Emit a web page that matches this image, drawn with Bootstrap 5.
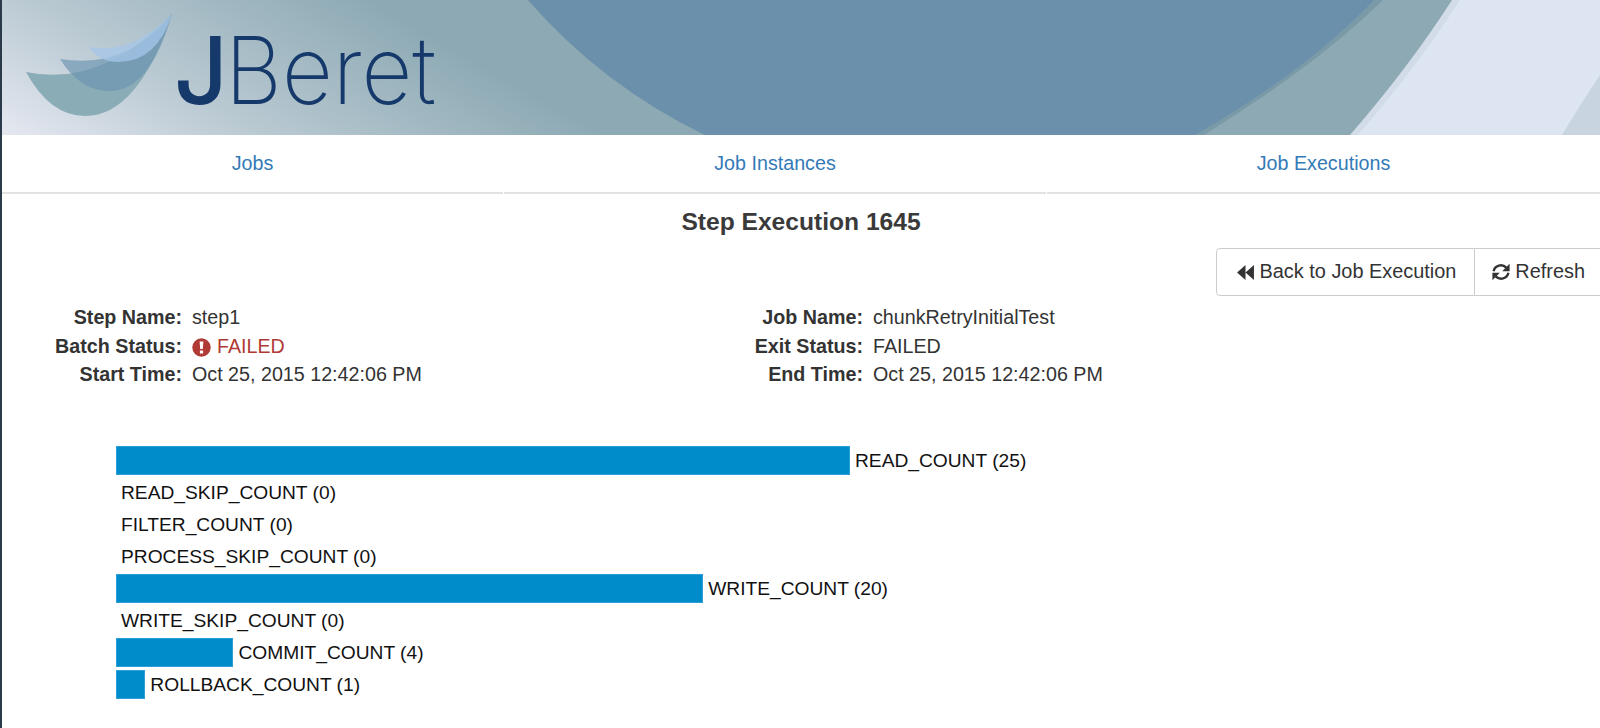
<!DOCTYPE html>
<html lang="en">
<head>
  <meta charset="UTF-8" />
  <meta name="viewport" content="width=device-width, initial-scale=1.0"/>
  <title>JBeret - Step Execution</title>
  <link href="https://cdn.jsdelivr.net/npm/bootstrap@5.3.0/dist/css/bootstrap.min.css" rel="stylesheet"/>
  <style>
    body {
      font-family: "Liberation Sans", Arial, sans-serif;
      font-size: 19.7px;
      color: #333;
      border-left: 2px solid #2b3a4a;
      min-height: 100vh;
      overflow: hidden;
    }
    .banner-art { display: block; width: 100%; height: 135px; }
    .logo-thin { font-family: Inter, "Liberation Sans", sans-serif; font-weight: 200; font-size: 94px; fill: #16396b; }
    .logo-bold { font-family: Inter, "Liberation Sans", sans-serif; font-weight: 500; font-size: 94px; fill: #16396b; }

    .main-tabs { height: 59px; }
    .main-tabs a {
      display: flex;
      align-items: center;
      justify-content: center;
      height: 59px;
      padding-top: 1px;
      color: #337ab7;
      text-decoration: none;
      border-bottom: 2px solid #e2e2e2;
    }
    .tab-jobs { width: 501px; margin-right: 1px; }
    .tab-instances { width: 542px; margin-right: 1px; }
    .tab-executions { flex: 1; }

    .step-title { font-size: 24.6px; font-weight: 700; line-height: 30px; margin: 13px 0 11px; text-align: center; color: #3a3a3a; }

    .back-group .btn {
      font-size: 19.9px;
      color: #333;
      height: 48px;
      padding: 0 18px 0 20px;
      border: 1px solid #ccc;
      border-radius: 4px 0 0 4px;
      display: flex;
      align-items: center;
      gap: 6px;
    }
    .back-group .btn + .btn { border-left: 0; border-right: 0; border-radius: 0; padding: 0 15px 0 16px; gap: 4px; }

    .info-row { margin-top: 7px; line-height: 28.5px; }
    .info-list { display: grid; column-gap: 10px; margin: 0; }
    .info-list dt { text-align: right; font-weight: 700; }
    .info-list dd { margin: 0; }
    .info-left { width: 682px; grid-template-columns: 180px 1fr; }
    .info-right { grid-template-columns: 179px 1fr; }
    .failed-text { color: #b03a36; }
    .failed-icon { margin-right: 6px; }

    .count-chart { margin: 57px 0 0 114px; color: #111; font-size: 19.2px; }
    .count-row { display: flex; align-items: center; height: 29px; margin-bottom: 3px; }
    .count-bar { height: 29px; background: #008bcb; border: 1px solid #2d9fd6; }
    .count-label { margin-left: 5px; padding-top: 2px; white-space: nowrap; }
  </style>
</head>
<body>

  <svg class="banner-art" viewBox="0 0 1598 135" preserveAspectRatio="none" aria-label="JBeret banner">
    <defs>
      <linearGradient id="bannerFade" gradientUnits="userSpaceOnUse" x1="0" y1="135" x2="150" y2="-125">
        <stop offset="0" stop-color="#e5e8f1"/>
        <stop offset="0.4" stop-color="#bccbd4"/>
        <stop offset="1" stop-color="#8daab4"/>
      </linearGradient>
    </defs>
    <rect width="1598" height="135" fill="url(#bannerFade)"/>
    <!-- big dark arc -->
    <path d="M526,0 Q600,85 703,135 L1202,135 Q1315,65 1381,0 Z" fill="#7b9aa8"/>
    <path d="M526,0 Q600,85 703,135 L1193,135 Q1303,72 1372,0 Z" fill="#6b90ab"/>
    <!-- light sweep on the right -->
    <path d="M1450,0 Q1407,67 1348,135 L1598,135 L1598,0 Z" fill="#d2dbe8"/>
    <path d="M1458,0 Q1415,67 1356,135 L1560,135 Q1578,105 1598,75 L1598,0 Z" fill="#dde5f3"/>
    <path d="M1560,135 Q1578,105 1598,75 L1598,135 Z" fill="#c8d4e0"/>
    <!-- logo swoosh -->
    <path d="M24,72 Q100,88 170,14 Q136,116 83,116 Q48,116 24,72 Z" fill="#8aacb7"/>
    <path d="M58,59 Q125,70 170,14 Q148,91 108,91 Q78,91 58,59 Z" fill="#6a93b0" fill-opacity="0.65"/>
    <path d="M87,47 Q130,55 170,14 Q155,62 116,62 Q98,62 87,47 Z" fill="#a6c6ea" fill-opacity="0.75"/>
    <text x="172" y="104" class="logo-bold">J</text>
    <text x="223" y="104" class="logo-thin" textLength="211" lengthAdjust="spacingAndGlyphs">Beret</text>
  </svg>

  <nav class="main-tabs d-flex">
    <a class="tab-jobs" href="#">Jobs</a>
    <a class="tab-instances" href="#">Job Instances</a>
    <a class="tab-executions" href="#">Job Executions</a>
  </nav>

  <h1 class="step-title">Step Execution 1645</h1>

  <div class="d-flex justify-content-end">
    <div class="back-group d-flex">
      <button class="btn" type="button">
        <svg width="17" height="15" viewBox="0 0 18 16" aria-hidden="true"><path d="M9 0v16L0 8zM18 0v16L9 8z" fill="#333"/></svg>
        Back to Job Execution
      </button>
      <button class="btn" type="button">
        <svg width="20" height="18" viewBox="0 0 20 18" aria-hidden="true">
          <path d="M2.6 8.2A7.4 7.4 0 0 1 15.2 4.6M17.4 9.8A7.4 7.4 0 0 1 4.8 13.4" fill="none" stroke="#333" stroke-width="2.4"/>
          <path d="M18.6 .8v7.4h-7.4zM1.4 17.2V9.8h7.4z" fill="#333"/>
        </svg>
        Refresh
      </button>
    </div>
  </div>

  <div class="info-row d-flex">
    <dl class="info-list info-left">
      <dt>Step Name:</dt><dd>step1</dd>
      <dt>Batch Status:</dt>
      <dd class="failed-text">
        <svg width="19" height="19" viewBox="0 0 19 19" class="align-text-bottom failed-icon" aria-hidden="true">
          <circle cx="9.5" cy="9.5" r="9.2" fill="#b03a36"/>
          <path d="M7.6 3.6h3.8l-.6 7.4H8.2zM7.9 12.4h3.2v3H7.9z" fill="#fff"/>
        </svg>FAILED
      </dd>
      <dt>Start Time:</dt><dd>Oct 25, 2015 12:42:06 PM</dd>
    </dl>
    <dl class="info-list info-right">
      <dt>Job Name:</dt><dd>chunkRetryInitialTest</dd>
      <dt>Exit Status:</dt><dd>FAILED</dd>
      <dt>End Time:</dt><dd>Oct 25, 2015 12:42:06 PM</dd>
    </dl>
  </div>

  <div class="count-chart" id="countChart"></div>

  <script>
    const UNIT_WIDTH = 29.36;
    const counts = [
      ["READ_COUNT", 25],
      ["READ_SKIP_COUNT", 0],
      ["FILTER_COUNT", 0],
      ["PROCESS_SKIP_COUNT", 0],
      ["WRITE_COUNT", 20],
      ["WRITE_SKIP_COUNT", 0],
      ["COMMIT_COUNT", 4],
      ["ROLLBACK_COUNT", 1]
    ];

    const chart = document.getElementById("countChart");
    counts.forEach(([name, value]) => {
      const row = document.createElement("div");
      row.className = "count-row";
      const bar = value > 0 ? `<div class="count-bar" style="width:${value * UNIT_WIDTH}px"></div>` : "";
      row.innerHTML = `${bar}<span class="count-label">${name} (${value})</span>`;
      chart.appendChild(row);
    });
  </script>
  <script src="https://cdn.jsdelivr.net/npm/bootstrap@5.3.0/dist/js/bootstrap.bundle.min.js"></script>
</body>
</html>
